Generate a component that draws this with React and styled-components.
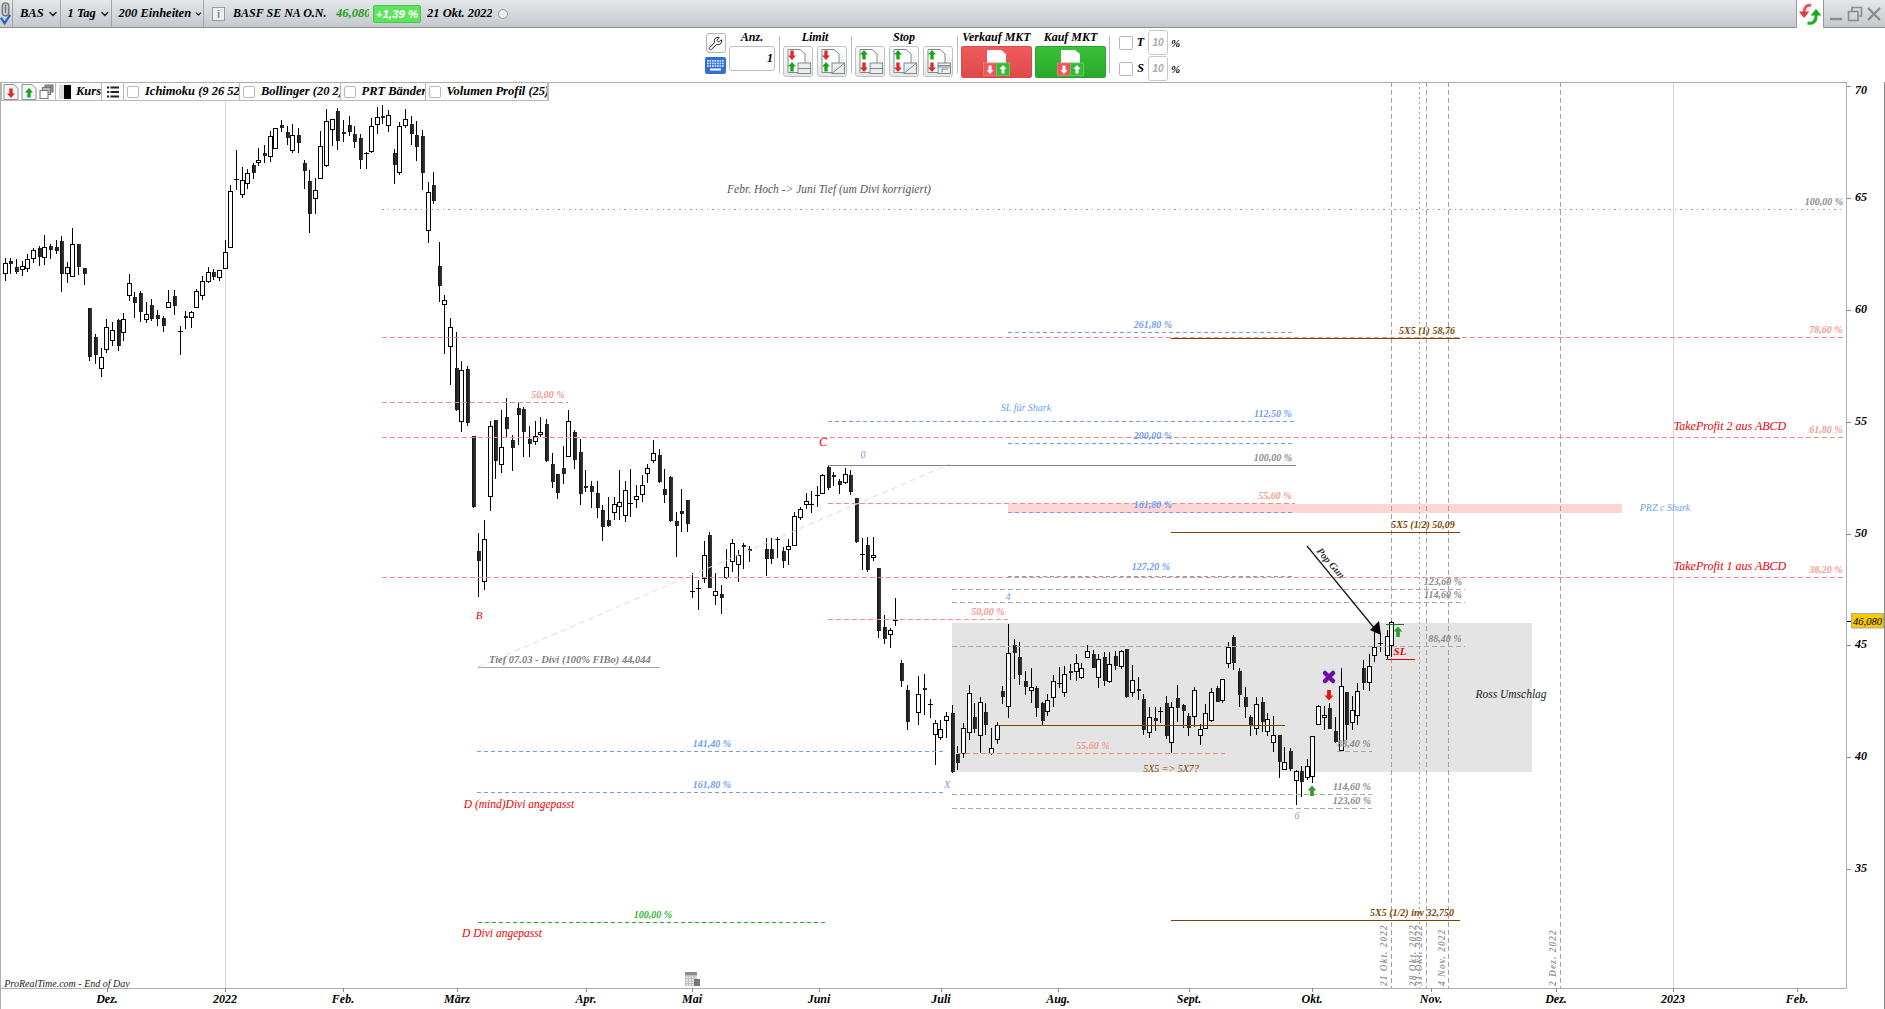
import React from 'react';
import styled, { createGlobalStyle } from 'styled-components';
import { ChevronDown, Wrench } from 'lucide-react';

const serif = '"Liberation Serif", "DejaVu Serif", serif';

const Global = createGlobalStyle`
  html, body { margin: 0; padding: 0; background: #fff; overflow: hidden; }
  #root { width: 1885px; height: 1009px; }
`;

const Page = styled.div`
  width: 1885px; height: 1009px; display: flex; flex-direction: column;
  font-family: ${serif}; font-style: italic; font-weight: 700; color: #000; background: #fff;
  overflow: hidden;
`;

/* ---------- header ---------- */
const Header = styled.header`
  flex: 0 0 28px; height: 28px; box-sizing: border-box; display: flex; align-items: center;
  background: linear-gradient(#e3e7ea, #c5c9cd); border-bottom: 1px solid #909090; font-size: 12.5px;
`;
const Segment = styled.div`
  flex: 0 0 ${p => p.$w}px; width: ${p => p.$w}px; height: 100%; box-sizing: border-box; display: flex;
  align-items: center; justify-content: flex-start; gap: 3px; padding-left: ${p => p.$pl ?? 7}px; border-right: 1px solid #a3a6a9;
  overflow: hidden; white-space: nowrap;
`;
const InfoBox = styled.div`
  margin-left: 8px; width: 13px; height: 14px; box-sizing: border-box; border: 1px solid #9b9b9b; background: #eceef0;
  color: #888; font: 700 11px/12px "Liberation Sans", sans-serif; text-align: center;
`;
const Name = styled.span`margin-left: 8px; width: 97px; overflow: hidden; white-space: nowrap; font-size: 12px;`;
const Price = styled.span`margin-left: 6px; width: 33px; overflow: hidden; color: #1b9e1b; white-space: nowrap; font-size: 12.5px;`;
const Badge = styled.span`
  margin-left: 4px; width: 48px; height: 18px; box-sizing: border-box; background: #5fe35f; border: 1px solid #4bc64b; border-radius: 2px;
  color: #fff; font: italic 700 11.5px/16px "Liberation Sans", sans-serif; text-align: center; white-space: nowrap; overflow: hidden;
`;
const DateText = styled.span`margin-left: 6px; width: 65px; overflow: hidden; white-space: nowrap; font-size: 12.5px;`;
const Ring = styled.span`
  margin-left: 6px; width: 10px; height: 10px; box-sizing: border-box; border-radius: 50%; border: 1.5px solid #999; background: #eee;
`;
const Spring = styled.div`flex: 1;`;
const RefreshCell = styled.div`
  flex: 0 0 28px; height: 28px; box-sizing: border-box; background: #fff; border-left: 1px solid #999; border-right: 1px solid #999;
  display: flex; align-items: center; justify-content: center;
`;
const WindowButtons = styled.div`
  flex: 0 0 61px; display: flex; align-items: center; justify-content: flex-start; gap: 3px; padding-left: 4px; box-sizing: border-box;
`;

/* ---------- toolbar ---------- */
const Toolbar = styled.div`
  flex: 0 0 54px; height: 54px; box-sizing: border-box; display: flex; justify-content: flex-start;
  padding-left: 705px; background: #fff;
`;
const ToolColumn = styled.div`
  display: flex; flex-direction: column; align-items: center; width: 21px; padding-top: 5px; gap: 4px;
`;
const IconBtn = styled.button`
  width: 20px; height: 20px; padding: 0; box-sizing: border-box; background: #fbfbfb; border: 1px solid #b5b5b5; border-radius: 3px;
  display: flex; align-items: center; justify-content: center;
`;
const Group = styled.div`
  display: flex; flex-direction: column; align-items: center; padding-top: ${p => p.$pt ?? 3}px; margin-left: ${p => p.$ml || 0}px;
`;
const GroupLabel = styled.div`font-size: 12px; line-height: 13px; height: 15px; white-space: nowrap; width: 100%; text-align: center; overflow: hidden;`;
const QtyInput = styled.div`
  width: 46px; height: 25px; box-sizing: border-box; border: 1px solid #bdbdbd; border-radius: 3px; text-align: right; padding-right: 1px;
  font-size: 12px; line-height: 23px;
`;
const Divider = styled.div`width: 1px; height: 37px; background: #bbb; margin: 8px 3px 0 ${p => p.$ml ?? 4}px;`;
const BtnRow = styled.div`display: flex; gap: ${p => p.$gap ?? 4}px;`;
const OrderBtn = styled.button`
  width: 30px; height: 31px; padding: 0; box-sizing: border-box; border: 1px solid #c2c2c2; border-radius: 3px;
  background: linear-gradient(#fff, #e6e6e6); display: flex; align-items: center; justify-content: center;
`;
const MarketBtn = styled.button`
  width: 71px; height: 32px; padding: 0; box-sizing: border-box; border-radius: 2px; border: 1px solid ${p => p.$buy ? '#2ca52c' : '#d94a4a'};
  background: ${p => p.$buy ? 'linear-gradient(#38c238, #2aa92a)' : 'linear-gradient(#f05a5e, #de4a4a)'};
  display: flex; align-items: center; justify-content: center;
`;
const PctCol = styled.div`display: flex; flex-direction: column; padding-left: 6px; padding-top: 2px; gap: 1px;`;
const PctRow = styled.div`display: flex; align-items: center; height: 25px;`;
const Check = styled.span`
  width: ${p => p.$s || 14}px; height: ${p => p.$s || 14}px; box-sizing: border-box; border: 1px solid #b9b9b9; border-radius: 2px; background: #fff; flex: none;
`;
const PctLetter = styled.span`width: 15px; text-align: center; font-size: 12px;`;
const PctInput = styled.span`
  width: 20px; height: 25px; box-sizing: border-box; border: 1px solid #c8c8c8; border-radius: 3px; color: #aaa;
  font: italic 700 10px/23px "Liberation Sans", sans-serif; text-align: center;
`;
const PctSign = styled.span`margin-left: 3px; font-size: 11px;`;

/* ---------- chart ---------- */
const ChartPanel = styled.section`position: relative; flex: 1; min-height: 0;`;
const Legend = styled.div`
  position: absolute; left: 1px; top: 1px; height: 18px; box-sizing: border-box; display: flex; align-items: center;
  background: #fbfbfb; border: 1px solid #bbb; border-top: 0; font-size: 12.5px;
`;
const LegendCell = styled.div`
  flex: 0 0 ${p => p.$w}px; width: ${p => p.$w}px; height: 100%; box-sizing: border-box; display: flex; align-items: center; gap: ${p => p.$gap ?? 6}px;
  padding-left: ${p => p.$pl ?? 3}px; border-right: 1px solid #bbb; overflow: hidden; white-space: nowrap;
`;
const Swatch = styled.span`width: 12px; height: 14px; flex: none; background: linear-gradient(90deg, #ddd 0 42%, #000 42% 100%);`;
const ChartSvg = styled.svg`display: block; width: 1885px; height: 927px;`;
const Txt = styled.text`
  font-family: ${serif}; font-style: italic; font-weight: ${p => p.$w || 700}; font-size: ${p => p.$s || 10}px; fill: ${p => p.$c || '#000'};
  text-anchor: ${p => p.$a || 'middle'}; dominant-baseline: central; letter-spacing: ${p => p.$ls || 0}px;
`;
const Rule = styled.line`
  stroke: ${p => p.$c}; stroke-width: ${p => p.$w || 1}; stroke-dasharray: ${p => p.$d || 'none'};
  shape-rendering: ${p => p.$soft ? 'auto' : 'crispEdges'};
`;
const Wick = styled.line`stroke: #000; stroke-width: 1; shape-rendering: crispEdges;`;
const Body = styled.rect`
  shape-rendering: crispEdges; fill: ${p => p.$white ? '#fbfbfb' : 'url(#blackBody)'}; stroke: ${p => p.$white ? '#000' : 'none'}; stroke-width: 1;
`;

/* ---------- data ---------- */
const Z4 = [[16,475,543,490,518,'w'],[30,475,521,484,491,'b'],[48,478,521,502,516,'b'],[67,484,527,499,506,'w'],[82,463,515,478,503,'w'],[100,445,489,451,473,'w'],[117,438,497,445,471,'b'],[133,405,495,440,472,'w'],[150,432,477,439,449,'b'],[168,420,462,442,453,'b'],[183,408,575,423,522,'b'],[202,487,548,502,518,'w'],[217,385,530,433,527,'w'],[234,432,525,432,500,'b'],[253,504,554,504,522,'b'],[267,623,782,625,770,'b'],[285,702,792,712,765,'b'],[304,745,830,772,805,'w'],[319,657,758,680,746,'w'],[337,666,737,691,719,'w'],[354,656,752,660,737,'b'],[370,640,722,658,697,'w'],[388,522,603,550,586,'w'],[402,577,653,591,608,'b'],[420,574,665,579,635,'b'],[439,606,669,643,658,'w'],[453,598,663,615,657,'b'],[471,630,678,645,656,'b'],[489,648,696,655,678,'b'],[505,570,625,607,620,'w'],[522,570,644,588,617,'b'],[541,678,765,694,694,'d'],[556,633,687,648,653,'b'],[574,634,684,635,650,'w'],[589,568,620,574,620,'w'],[607,529,600,544,586,'w'],[625,502,548,517,544,'w'],[638,507,540,517,530,'b'],[658,511,542,511,532,'w'],[676,420,503,457,503,'w'],[691,255,442,274,440,'w'],[709,150,270,236,236,'d'],[727,201,294,241,281,'w'],[742,208,266,220,250,'w'],[759,190,237,195,218,'b'],[775,144,198,181,187,'w'],[792,136,188,159,167,'b'],[811,94,185,109,167,'w'],[826,85,143,85,143,'w'],[843,60,96,75,83,'b'],[861,79,135,96,113,'b'],[877,72,158,106,149,'w'],[894,84,159,105,128,'b'],[912,181,266,189,213,'b'],[928,210,398,243,341,'b'],[946,234,342,271,293,'w'],[961,94,233,139,233,'w'],[979,27,200,64,194,'w'],[997,58,138,58,86,'w'],[1011,25,150,33,122,'b'],[1030,60,126,97,101,'b'],[1047,48,108,75,96,'b'],[1062,78,144,102,125,'b'],[1080,102,207,114,180,'b'],[1098,155,207,159,159,'d'],[1114,54,158,79,152,'w'],[1132,22,102,52,71,'w'],[1147,15,72,48,53,'b'],[1165,30,96,46,74,'w'],[1182,148,252,159,194,'b'],[1198,67,224,79,217,'w'],[1216,27,83,58,74,'w'],[1233,48,135,72,102,'b'],[1248,64,183,105,140,'b'],[1266,90,270,108,218,'b'],[1285,246,429,277,391,'w'],[1299,216,312,255,303,'b'],[1317,426,606,498,557,'b'],[1333,586,762,601,613,'w'],[1351,655,855,682,737,'w']];

const Z5 = [[48,-144,92,-36,90,'b'],[64,-57,155,-30,124,'w'],[81,-42,137,-33,128,'b'],[99,168,383,168,381,'b'],[115,460,650,514,542,'b'],[133,420,630,478,604,'w'],[151,122,392,139,349,'w'],[164,120,296,120,244,'b'],[184,90,278,202,253,'w'],[198,55,171,111,146,'b'],[216,166,272,180,203,'b'],[234,68,194,85,104,'b'],[248,82,230,87,155,'b'],[267,138,231,177,191,'b'],[286,123,194,167,184,'w'],[301,111,171,157,163,'w'],[318,117,245,133,243,'b'],[336,220,323,252,305,'b'],[351,282,356,282,338,'b'],[369,198,311,265,281,'b'],[385,91,232,124,227,'w'],[402,151,266,156,239,'b'],[420,176,374,216,341,'b'],[436,270,335,319,323,'b'],[453,304,385,318,335,'b'],[471,304,413,340,383,'b'],[486,376,482,391,440,'b'],[504,351,440,420,438,'b'],[523,352,419,371,397,'w'],[538,270,419,367,379,'w'],[556,304,425,331,406,'w'],[571,268,410,370,370,'d'],[589,316,384,349,356,'w'],[607,285,366,316,341,'w'],[622,252,308,265,280,'w'],[640,180,250,220,241,'w'],[657,207,308,225,305,'b'],[672,268,368,327,344,'b'],[690,289,425,291,423,'b'],[708,396,530,424,437,'b'],[723,327,455,394,403,'b'],[741,360,455,361,431,'b'],[757,580,655,632,632,'d'],[775,600,690,625,625,'d'],[793,484,608,526,594,'w'],[807,456,625,466,623,'b'],[826,580,674,634,646,'w'],[843,615,701,643,655,'b'],[859,507,597,562,592,'w'],[877,477,576,490,544,'w'],[895,511,605,526,553,'w'],[909,490,567,495,499,'b'],[928,499,546,508,512,'b'],[978,475,587,507,536,'b'],[993,475,552,507,536,'b'],[1012,472,533,476,476,'d'],[1028,500,564,514,542,'b'],[1045,477,555,499,508,'w'],[1063,396,497,409,494,'w'],[1081,381,419,388,412,'w'],[1097,340,386,364,373,'w'],[1112,333,398,372,372,'d'],[1130,319,381,345,345,'d'],[1147,282,343,286,340,'w'],[1164,258,330,261,323,'b'],[1179,276,317,286,290,'b'],[1197,298,342,304,314,'b'],[1216,265,313,283,307,'w'],[1230,270,344,286,335,'b'],[1248,354,488,355,486,'b'],[1267,475,570,523,523,'d'],[1281,472,575,495,570,'b'],[1300,471,542,526,532,'w'],[1314,565,775,565,752,'b'],[1332,705,792,741,777,'b'],[1351,745,803,749,763,'w'],[1366,655,738,719,719,'d'],[1383,840,920,850,903,'b'],[1401,915,1050,930,1026,'b'],[1435,888,1035,943,996,'w'],[1452,882,1005,925,929,'b']];

const Z6 = [[0,297,355,312,312,'d'],[16,360,495,370,403,'w'],[31,360,420,388,410,'w'],[48,335,415,347,361,'w'],[65,315,518,340,516,'b'],[80,438,510,462,488,'b'],[100,370,473,385,460,'w'],[118,255,420,278,397,'w'],[132,310,400,351,387,'b'],[151,290,458,305,406,'w'],[164,310,405,337,374,'b'],[184,385,465,445,458,'w'],[202,366,432,376,418,'w'],[216,258,312,273,290,'b'],[235,72,353,160,319,'w'],[252,118,238,135,158,'b'],[267,127,255,171,224,'b'],[285,213,285,243,260,'b'],[304,204,310,262,271,'w'],[318,258,350,264,323,'b'],[336,307,375,310,362,'b'],[352,281,348,301,334,'w'],[370,225,320,244,292,'w'],[388,200,265,250,250,'d'],[403,198,290,223,277,'w'],[421,192,240,214,218,'b'],[439,163,243,190,214,'w'],[454,190,238,203,232,'w'],[472,135,172,152,172,'w'],[489,150,205,162,203,'b'],[505,162,263,176,232,'w'],[522,157,258,172,242,'b'],[538,157,250,193,244,'w'],[555,153,210,169,199,'b'],[574,150,207,154,199,'w'],[589,147,293,148,290,'b'],[607,195,290,241,277,'w'],[625,232,300,268,272,'b'],[638,283,405,297,391,'b'],[658,321,413,352,397,'w'],[675,320,393,354,362,'b'],[690,320,368,333,333,'d'],[708,287,417,309,407,'b'],[724,305,460,322,427,'w'],[741,255,365,295,323,'b'],[759,313,383,316,332,'b'],[774,340,407,349,383,'b'],[793,261,380,271,349,'w'],[811,372,435,388,406,'w'],[826,311,387,338,385,'w'],[844,265,365,277,361,'w'],[860,258,306,265,305,'b'],[877,237,308,238,301,'w'],[895,125,205,142,190,'w'],[909,105,209,111,188,'b'],[927,205,322,213,284,'b'],[945,262,353,292,320,'b'],[960,345,407,351,375,'b'],[979,292,405,313,385,'w'],[996,292,395,306,365,'b'],[1012,340,407,358,394,'w'],[1030,349,457,406,427,'w'],[1047,405,533,405,485,'b'],[1063,440,510,487,508,'w'],[1080,443,512,453,506,'b'],[1097,510,614,512,541,'w'],[1113,498,592,514,547,'b'],[1132,478,541,499,532,'w'],[1147,408,549,409,529,'w'],[1165,316,375,319,373,'w'],[1183,318,390,346,352,'w'],[1197,310,388,324,386,'b'],[1215,350,430,393,426,'b'],[1234,205,452,259,451,'w'],[1247,275,420,276,375,'b'],[1267,288,390,331,367,'w'],[1282,248,375,274,346,'w'],[1298,180,270,205,248,'b'],[1318,163,272,199,247,'w'],[1333,90,187,142,166,'w'],[1351,100,155,130,130,'d'],[1370,90,178,107,164,'w'],[1384,62,170,65,136,'w']];

const toAbs = (list, ox, oy) => list.map(([x, h, l, t, b, k]) => ({ x: ox + x / 3, h: oy + h / 3, l: oy + l / 3, t: oy + t / 3, b: oy + b / 3, k }));
const candles = [...toAbs(Z4, 0, 100), ...toAbs(Z5, 440, 380), ...toAbs(Z6, 930, 600)];

const RED = '#f38a80', BLUE = '#6f9df2', GRAY = '#a9a9a9', BROWN = '#7d4400', GREEN = '#23b523';
const RED_T = '#f59a90', BLUE_T = '#6f9df2', GRAY_T = '#8b8b8b', BROWN_T = '#7d4400';
const HL = [
  [382, 1843, 209, '#9a9a9a', '1.5 4'],
  [382, 1843, 337, RED, '5 3'], [382, 1843, 437, RED, '5 3'], [382, 1843, 577, RED, '5 3'],
  [382, 568, 402, RED, '5 3'],
  [828, 1295, 503, RED, '5 3'], [828, 1008, 619, RED, '5 3'], [957, 1225, 753, RED, '5 3'],
  [1008, 1292, 332, BLUE, '4 3'], [828, 1295, 421, BLUE, '4 3'], [1008, 1292, 443, BLUE, '4 3'], [1008, 1292, 512, BLUE, '4 3'], [1008, 1292, 576, BLUE, '4 3'],
  [477, 946, 751, BLUE, '4 3'], [477, 946, 792, BLUE, '4 3'],
  [952, 1465, 589, GRAY, '5 3'], [952, 1465, 602, GRAY, '5 3'], [952, 1465, 646, GRAY, '5 3'], [1337, 1372, 751, GRAY, '5 3'], [952, 1372, 794, GRAY, '5 3'], [952, 1372, 808, GRAY, '5 3'],
  [478, 827, 922, GREEN, '4 3'],
];
const SOLID = [
  [828, 1296, 465, '#858585'], [478, 660, 667, '#a5a5a5'], [1171, 1460, 338, BROWN], [1171, 1460, 532, BROWN], [1171, 1460, 920, BROWN],
  [997, 1285, 725, BROWN], [1386, 1404, 624, '#0c7d0c'], [1386, 1415, 659, '#e00000'],
];
const PCT = [
  ['261,80 %', 1153, 324, BLUE_T], ['112,50 %', 1273, 413, BLUE_T], ['200,00 %', 1153, 435, BLUE_T], ['161,80 %', 1153, 504, BLUE_T], ['127,20 %', 1151, 566, BLUE_T],
  ['141,40 %', 712, 743, BLUE_T], ['161,80 %', 712, 784, BLUE_T],
  ['100,00 %', 1273, 457, GRAY_T], ['100,00 %', 1824, 201, GRAY_T], ['123,60 %', 1443, 581, GRAY_T], ['114,60 %', 1443, 594, GRAY_T], ['88,40 %', 1445, 638, GRAY_T], ['88,40 %', 1354, 743, GRAY_T], ['114,60 %', 1352, 786, GRAY_T], ['123,60 %', 1352, 800, GRAY_T],
  ['55,60 %', 1275, 495, RED_T], ['50,00 %', 988, 611, RED_T], ['55,60 %', 1093, 745, RED_T], ['50,00 %', 548, 394, RED_T], ['78,60 %', 1826, 329, RED_T], ['61,80 %', 1826, 429, RED_T], ['38,20 %', 1826, 569, RED_T],
  ['100,00 %', 653, 914, '#2fb52f'],
];
const NOTES = [
  ['5X5 (1) 58,76', 1427, 330, BROWN_T, 10, 700], ['5X5 (1/2) 50,09', 1423, 524, BROWN_T, 10, 700], ['5X5 (1/2) inv 32,750', 1412, 912, BROWN_T, 10, 700], ['5X5 => 5X7?', 1171, 768, BROWN_T, 10, 400],
  ['SL für Shark', 1026, 407, BLUE_T, 10, 400], ['PRZ c Shark', 1665, 507, BLUE_T, 10, 400],
  ['TakeProfit 2 aus ABCD', 1730, 426, '#ee0000', 12, 400], ['TakeProfit 1 aus ABCD', 1730, 566, '#ee0000', 12, 400],
  ['D Divi angepasst', 502, 933, '#ee0000', 11.5, 400], ['D (mind)Divi angepasst', 519, 804, '#ee0000', 11.5, 400],
  ['B', 479, 615, '#ee0000', 11, 400], ['C', 823, 442, '#ee0000', 12, 400], ['0', 863, 454, BLUE_T, 10, 400], ['4', 1008, 596, BLUE_T, 10, 400], ['X', 947, 784, BLUE_T, 10, 400], ['6', 1297, 815, BLUE_T, 10, 400],
  ['SL', 1400, 651, '#ee0000', 11, 700], ['Ross Umschlag', 1511, 694, '#222', 11.5, 400],
  ['Tief 07.03 - Divi (100% FIBo) 44,044', 570, 659, '#808080', 10.5, 700],
  ['Febr. Hoch -> Juni Tief (um Divi korrigiert)', 829, 189, '#555', 11.5, 400],
  ['ProRealTime.com - End of Day', 67, 983, '#222', 10, 400],
];
const YTICKS = [[70, 86.5, 90], [65, 198.5, 197], [60, 310.5, 309], [55, 422.5, 421], [50, 534.5, 533], [45, 645.5, 644], [40, 757.5, 756], [35, 869.5, 868]];
const XTICKS = [['Dez.', 107], ['2022', 225], ['Feb.', 343], ['März', 457], ['Apr.', 586], ['Mai', 692], ['Juni', 819], ['Juli', 941], ['Aug.', 1058], ['Sept.', 1189], ['Okt.', 1312], ['Nov.', 1431], ['Dez.', 1556], ['2023', 1673], ['Feb.', 1797]];
const VLINES = [[1391, '5 3'], [1419, '1.5 3.5'], [1426, '5 3'], [1448, '5 3'], [1560, '5 3']];
const VDATES = [['21 Okt. 2022', 1384], ['28 Okt. 2022', 1413], ['31 Okt. 2022', 1419], ['4 Nov. 2022', 1442], ['2 Dez. 2022', 1553]];

/* ---------- drawings ---------- */
const Candle = ({ x, h, l, t, b, k }) => {
  const X = Math.round(x);
  const top = Math.round(t);
  const bot = Math.round(b);
  return (
    <g>
      <Wick x1={X + 0.5} x2={X + 0.5} y1={Math.round(h)} y2={Math.round(l)} />
      {k === 'w' && <Body $white x={X - 1.5} y={top + 0.5} width="4" height={Math.max(bot - top, 2)} />}
      {k === 'b' && <Body x={X - 1} y={top} width="4" height={Math.max(bot - top, 2)} />}
      {k === 'd' && <Wick x1={X - 2} x2={X + 3} y1={top + 0.5} y2={top + 0.5} />}
    </g>
  );
};
const Arrow = ({ x, y, c, up, k = 1 }) => (
  <polygon
    transform={`translate(${x} ${y}) scale(${k} ${up ? k : -k})`}
    points="0,-5 4,-0.5 1.7,-0.5 1.7,4.5 -1.7,4.5 -1.7,-0.5 -4,-0.5"
    fill={c}
  />
);
const OrderIcon = ({ topUp, box }) => (
  <svg width="28" height="27" viewBox="0 0 28 27">
    <path d="M4 1.5H16L21 6V24.5H4Z" fill="#fff" stroke="#7d8a8d" />
    <Arrow x={8} y={7} c={topUp ? '#1aa51a' : '#e02a2a'} up={topUp} />
    <Arrow x={8} y={19} c={topUp ? '#e02a2a' : '#1aa51a'} up={!topUp} />
    <rect x="14" y="15" width="12.5" height="10.5" fill="#eceeee" stroke="#7d8a8d" />
    {box === 'lines' && <path d="M14 20.5H26.5" stroke="#7d8a8d" />}
    {box === 'diag' && <path d="M14 25.5L26.5 15" stroke="#7d8a8d" />}
    {box === 'trail' && <path d="M14 17.5H26.5M14 19H26.5M18 24.5V21H24" stroke="#7d8a8d" fill="none" />}
  </svg>
);
const MarketIcon = () => (
  <svg width="27" height="27" viewBox="0 0 27 27">
    <path d="M4 1H18L23 5V14H4Z" fill="#fff" />
    <rect x="0.5" y="14" width="13" height="12.5" fill="#ee5458" stroke="#ea7a7a" />
    <rect x="13.5" y="14" width="13" height="12.5" fill="#35ba35" stroke="#5ad05a" />
    <Arrow x={7} y={20.5} c="#fff" k={0.9} />
    <Arrow x={20} y={20.5} c="#fff" k={0.9} up />
  </svg>
);
const Keyboard = () => (
  <svg width="21" height="17" viewBox="0 0 21 17">
    <rect width="21" height="17" rx="2" fill="#2f6fd6" />
    {[3, 5.6, 8.2].map(y => [2.5, 5, 7.5, 10, 12.5, 15, 17.5].map(x => <rect key={x + '-' + y} x={x - 0.5} y={y} width="1.7" height="1.7" fill="#d5e4fb" />))}
    <rect x="5" y="11.5" width="11" height="2" fill="#fff" />
  </svg>
);
const Refresh = () => (
  <svg width="24" height="24" viewBox="0 0 24 24">
    <path d="M13 3.5C8.5 2.5 6 5.5 6 10" fill="none" stroke="#ef5050" strokeWidth="3" />
    <polygon points="1,9.5 11.5,9.5 6,16" fill="#e33a3a" />
    <path d="M9.5 21C15 22.5 18.5 19 18 13" fill="none" stroke="#20ad20" strokeWidth="3" />
    <polygon points="12.5,13.5 23.5,13.5 18,7" fill="#19a819" />
  </svg>
);
const WinMin = () => <svg width="16" height="16" viewBox="0 0 16 16"><path d="M2 13H14" stroke="#8c8c8c" strokeWidth="2.4" /></svg>;
const WinMax = () => <svg width="16" height="16" viewBox="0 0 16 16"><path d="M5 5V1.5H14.5V10H11M1.5 5.5H11V14.5H1.5Z" fill="none" stroke="#8c8c8c" strokeWidth="1.6" /></svg>;
const WinClose = () => <svg width="16" height="16" viewBox="0 0 16 16"><path d="M2 2L14 14M14 2L2 14" stroke="#8c8c8c" strokeWidth="2.4" /></svg>;
const PinCheck = () => (
  <svg width="13" height="27" viewBox="0 0 13 27">
    <rect x="2.5" y="2" width="7" height="14" rx="3.5" fill="#ccc" stroke="#777" strokeWidth="1.5" />
    <path d="M6 4V13" stroke="#777" strokeWidth="1.5" />
    <path d="M1 18L5 24L11 15" fill="none" stroke="#2465cc" strokeWidth="2.4" />
  </svg>
);
const MiniDoc = ({ up }) => (
  <svg width="16" height="16" viewBox="0 0 16 16">
    <path d="M1 .5H11L15 4.5V15.5H1Z" fill="#f2f4f5" stroke="#8a9599" />
    <Arrow x={8} y={9} c={up ? '#1aa51a' : '#e02a2a'} up={up} />
  </svg>
);
const Stacked = () => (
  <svg width="15" height="16" viewBox="0 0 15 16">
    <rect x="6" y="1" width="8" height="7" fill="#888" stroke="#777" />
    <rect x="3.5" y="3.5" width="8" height="7" fill="#bbb" stroke="#777" />
    <rect x="1" y="6.5" width="8" height="8" fill="#fff" stroke="#777" />
  </svg>
);
const ListIcon = () => (
  <svg width="12" height="12" viewBox="0 0 12 12">
    {[1.5, 6, 10.5].map(y => <g key={y}><rect x="0" y={y - 1} width="2.2" height="2" fill="#222" /><rect x="3.5" y={y - 1} width="8.5" height="2" fill="#222" /></g>)}
  </svg>
);
const CalendarIcon = () => (
  <g transform="translate(685 971)">
    <rect x="0" y="1" width="12" height="14" fill="#bdbdbd" />
    <rect x="0" y="1" width="12" height="3" fill="#8d8d8d" />
    {[5.5, 8, 10.5, 13].map(y => [1, 4, 7, 10].map(x => <rect key={x + '-' + y} x={x} y={y} width="1.8" height="1.6" fill="#eee" />))}
    <rect x="9" y="8" width="6" height="7" fill="#777" />
  </g>
);

const Chart = () => (
  <ChartSvg viewBox="0 82 1885 927">
    <defs>
      <linearGradient id="blackBody" x1="0" x2="1" y1="0" y2="0">
        <stop offset="0" stopColor="#111" /><stop offset="1" stopColor="#3a3a3a" />
      </linearGradient>
    </defs>
    <rect x="952" y="623" width="580" height="149" fill="#e4e4e4" />
    <rect x="1008" y="504" width="614" height="9" fill="#fdd5d5" />
    {[225, 1673].map(x => <Rule key={x} x1={x + 0.5} x2={x + 0.5} y1="82" y2="988" $c="#d6d6d6" />)}
    {VLINES.map(([x, d]) => <Rule key={x} x1={x + 0.5} x2={x + 0.5} y1="82" y2="988" $c="#a0a0a0" $d={d} />)}
    {candles.map((c, i) => <Candle key={i} {...c} />)}
    <Rule $soft x1="478" y1="667" x2="950" y2="464" $c="#dcdcdc" $d="6 4" />
    {HL.map(([a, b, y, c, d], i) => <Rule key={i} x1={a} x2={b} y1={y + 0.5} y2={y + 0.5} $c={c} $d={d} />)}
    {SOLID.map(([a, b, y, c], i) => <Rule key={i} x1={a} x2={b} y1={y + 0.5} y2={y + 0.5} $c={c} />)}
    <Rule $soft x1="1307" y1="546" x2="1375" y2="629" $c="#111" $w="1.2" />
    <polygon points="1381,635 1370,630 1379,621" fill="#000" />
    <Arrow x={1312} y={791} c="#2ea02e" up k={1.1} />
    <Arrow x={1398} y={632} c="#2ea02e" up k={1.1} />
    <Arrow x={1329} y={695} c="#ee1111" k={1.1} />
    <path d="M1325 673L1333 681M1333 673L1325 681" stroke="#6a0dad" strokeWidth="4.5" strokeLinecap="round" />
    {PCT.map(([t, x, y, c], i) => <Txt key={i} x={x} y={y} $c={c}>{t}</Txt>)}
    {NOTES.map(([t, x, y, c, s, w], i) => <Txt key={i} x={x} y={y} $c={c} $s={s} $w={w}>{t}</Txt>)}
    <Txt transform="translate(1331 563) rotate(49)" $s={10} $c="#333">Pop Gun</Txt>
    {VDATES.map(([t, x]) => <Txt key={t} transform={`translate(${x} 986) rotate(-90)`} $a="start" $s={9.5} $c="#999" $ls={1}>{t}</Txt>)}
    <CalendarIcon />
    <Rule x1="0" x2="1847" y1="82.5" y2="82.5" $c="#aeaeae" $w="1" />
    <Rule x1="0.5" x2="0.5" y1="82" y2="1009" $c="#aeaeae" $w="1" />
    <Rule x1="1846.5" x2="1846.5" y1="82" y2="988" $c="#aeaeae" $w="1" />
    <Rule x1="0" x2="1847" y1="988.5" y2="988.5" $c="#aeaeae" $w="1" />
    <Rule x1="1884.5" x2="1884.5" y1="82" y2="1009" $c="#8a8a8a" />
    {YTICKS.map(([v, y, ly]) => (
      <g key={v}>
        <Rule x1="1847" x2="1851" y1={y} y2={y} $c="#8a8a8a" />
        <Txt x="1861" y={ly} $s={12}>{v}</Txt>
      </g>
    ))}
    {XTICKS.map(([t, x]) => (
      <g key={t + x}>
        <Rule x1={x + 0.5} x2={x + 0.5} y1="988" y2="992" $c="#8a8a8a" />
        <Txt x={x} y="999" $s={12}>{t}</Txt>
      </g>
    ))}
    <Rule x1="1847" x2="1851" y1="621.5" y2="621.5" $c="#000" />
    <rect x="1851.5" y="613.5" width="32" height="14.5" fill="#f6c900" stroke="#a9a9a9" />
    <Txt x="1867.5" y="621" $s={10.5} $w={400}>46,080</Txt>
  </ChartSvg>
);

const Dropdown = ({ w, children }) => (
  <Segment $w={w}>
    <span>{children}</span>
    <ChevronDown size={12} strokeWidth={3} color="#222" />
  </Segment>
);

export default function App() {
  return (
    <Page>
      <Global />
      <Header>
        <Segment $w={13} $pl={0}><PinCheck /></Segment>
        <Dropdown w={47.5}>BAS</Dropdown>
        <Dropdown w={51}>1 Tag</Dropdown>
        <Dropdown w={92.5}>200 Einheiten</Dropdown>
        <InfoBox>i</InfoBox>
        <Name>BASF SE NA O.N.</Name>
        <Price>46,080</Price>
        <Badge>+1,39 %</Badge>
        <DateText>21 Okt. 2022</DateText>
        <Ring />
        <Spring />
        <RefreshCell><Refresh /></RefreshCell>
        <WindowButtons><WinMin /><WinMax /><WinClose /></WindowButtons>
      </Header>

      <Toolbar>
        <ToolColumn>
          <IconBtn><Wrench size={15} strokeWidth={1.6} color="#222" /></IconBtn>
          <Keyboard />
        </ToolColumn>
        <Group $ml={3}>
          <GroupLabel>Anz.</GroupLabel>
          <QtyInput>1</QtyInput>
        </Group>
        <Divider />
        <Group>
          <GroupLabel>Limit</GroupLabel>
          <BtnRow>
            <OrderBtn><OrderIcon box="lines" /></OrderBtn>
            <OrderBtn><OrderIcon box="diag" /></OrderBtn>
          </BtnRow>
        </Group>
        <Divider />
        <Group>
          <GroupLabel>Stop</GroupLabel>
          <BtnRow>
            <OrderBtn><OrderIcon topUp box="lines" /></OrderBtn>
            <OrderBtn><OrderIcon topUp box="diag" /></OrderBtn>
            <OrderBtn><OrderIcon topUp box="trail" /></OrderBtn>
          </BtnRow>
        </Group>
        <Divider />
        <Group $pt={0}>
          <BtnRow $gap={3}>
            <Group><GroupLabel>Verkauf MKT</GroupLabel><MarketBtn><MarketIcon /></MarketBtn></Group>
            <Group><GroupLabel>Kauf MKT</GroupLabel><MarketBtn $buy><MarketIcon /></MarketBtn></Group>
          </BtnRow>
        </Group>
        <Divider $ml={3} />
        <PctCol>
          <PctRow><Check /><PctLetter>T</PctLetter><PctInput>10</PctInput><PctSign>%</PctSign></PctRow>
          <PctRow><Check /><PctLetter>S</PctLetter><PctInput>10</PctInput><PctSign>%</PctSign></PctRow>
        </PctCol>
      </Toolbar>

      <ChartPanel>
        <Chart />
        <Legend>
          <LegendCell $w={54} $gap={2} $pl={1}><MiniDoc /><MiniDoc up /><Stacked /></LegendCell>
          <LegendCell $w={46} $gap={5} $pl={3}><Swatch />Kurs</LegendCell>
          <LegendCell $w={22} $pl={5}><ListIcon /></LegendCell>
          <LegendCell $w={116}><Check $s={12} />Ichimoku (9 26 52)</LegendCell>
          <LegendCell $w={100.5}><Check $s={12} />Bollinger (20 2)</LegendCell>
          <LegendCell $w={85}><Check $s={12} />PRT Bänder</LegendCell>
          <LegendCell $w={122}><Check $s={12} />Volumen Profil (25)</LegendCell>
        </Legend>
      </ChartPanel>
    </Page>
  );
}
